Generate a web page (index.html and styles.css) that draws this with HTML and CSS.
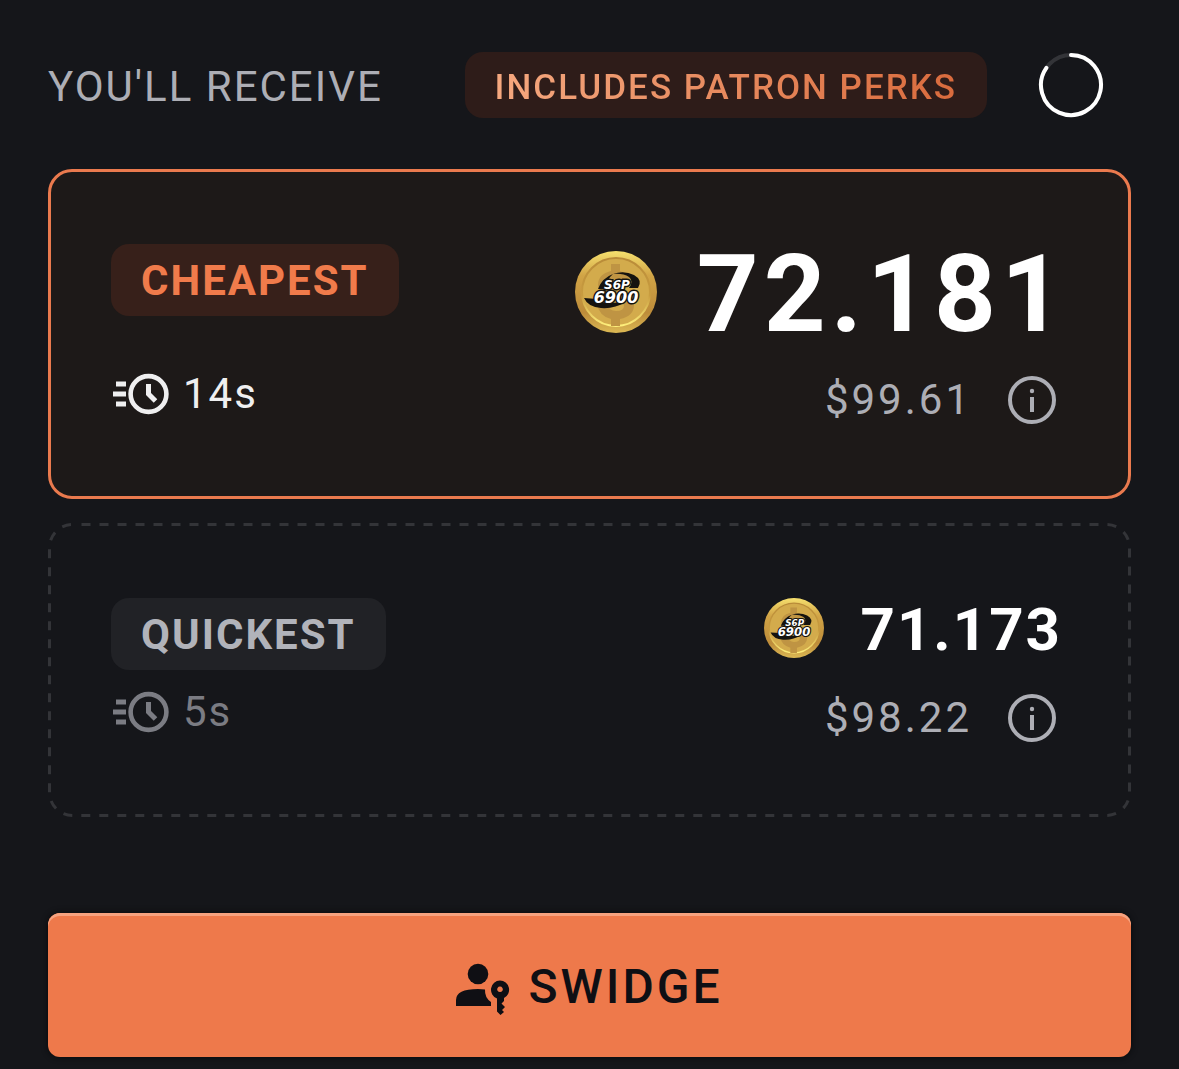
FILE: index.html
```html
<!DOCTYPE html>
<html lang="en">
<head>
<meta charset="utf-8">
<meta name="viewport" content="width=device-width, initial-scale=1">
<title>Swidge</title>
<link rel="stylesheet" href="styles.css">
</head>
<body>
<svg class="sprite" aria-hidden="true">
  <defs>
    <linearGradient id="rim" x1="0" y1="0" x2="0" y2="1">
      <stop offset="0" stop-color="#f6e06e"/>
      <stop offset="0.3" stop-color="#d1a446"/>
      <stop offset="0.75" stop-color="#bd8c3a"/>
      <stop offset="1" stop-color="#dcb954"/>
    </linearGradient>
    <linearGradient id="groove" x1="0" y1="0" x2="0" y2="1">
      <stop offset="0" stop-color="#b98b38"/>
      <stop offset="0.55" stop-color="#c99d40"/>
      <stop offset="1" stop-color="#fff07c"/>
    </linearGradient>
  </defs>
  <symbol id="coin" viewBox="0 0 82 82">
    <circle cx="41" cy="41" r="41" fill="url(#rim)"/>
    <circle cx="41" cy="41" r="34" fill="#d3ab4c" stroke="url(#groove)" stroke-width="2"/>
    <path d="M36 13h9v7q11 3 13 13H48q-2-5-8-5-7 0-7 5 0 4 9 6 17 4 17 15 0 11-14 14v7h-9v-7Q24 65 22 53h10q2 7 9 7 8 0 8-5 0-4-9-6-17-3-17-15 0-11 13-14z" fill="#bf9443"/>
    <path d="M38 23Q49 19 59 24 68 29 63 37H54Q59 30 54 26 48 22 38 23z" fill="#15130f"/>
    <path d="M38 23Q27 27 23 38H30Q31 29 38 23z" fill="#15130f"/>
    <path d="M9 47Q13 56 26 57 40 58 50 51L36 52Q27 53 22 48z" fill="#15130f"/>
  </symbol>
  <symbol id="clock" viewBox="0 0 60 60">
    <g fill="none" stroke="currentColor" stroke-width="5">
      <circle cx="37.500" cy="30" r="17.900" stroke-width="4.600"/>
      <path d="M37.500 20v10l7 7M5 20h10M2 30h13M5 40h10"/>
    </g>
  </symbol>
  <symbol id="info" viewBox="0 0 48 48">
    <circle cx="24" cy="24" r="22" fill="none" stroke="currentColor" stroke-width="4"/>
    <circle cx="24" cy="15" r="2.200" fill="currentColor"/>
    <path d="M24 21v15" stroke="currentColor" stroke-width="4"/>
  </symbol>
</svg>

<main class="panel">
  <header class="header">
    <h1 class="title">YOU'LL RECEIVE</h1>
    <div class="header-end">
      <span class="perks"><span class="perks-text">INCLUDES PATRON PERKS</span></span>
      <button class="refresh" type="button" aria-label="Refresh quotes">
        <svg width="66" height="66" viewBox="0 0 66 66" fill="none" stroke-width="4">
          <circle cx="33" cy="33" r="30" stroke="#333438"/>
          <path d="M33 3A30 30 0 1 1 8.400 15.800" stroke="#fff" stroke-linecap="round"/>
        </svg>
      </button>
    </div>
  </header>

  <section class="quotes">
    <article class="quote selected">
      <div class="side">
        <span class="badge">CHEAPEST</span>
        <span class="time"><svg class="clock"><use href="#clock"/></svg>14s</span>
      </div>
      <div class="amounts">
        <div class="amount">
          <svg class="coin" viewBox="0 0 82 82">
            <use href="#coin"/>
            <text class="coin-text" x="42" y="38" font-size="12">S6P</text>
            <text class="coin-text" x="41" y="52" font-size="16">6900</text>
          </svg>
          <span class="number">72.181</span>
        </div>
        <div class="value">$99.61
          <button class="info" type="button" aria-label="Cheapest route details"><svg class="info-icon"><use href="#info"/></svg></button>
        </div>
      </div>
    </article>

    <article class="quote">
      <svg class="outline" aria-hidden="true"><rect class="outline-rect"/></svg>
      <div class="side">
        <span class="badge">QUICKEST</span>
        <span class="time"><svg class="clock"><use href="#clock"/></svg>5s</span>
      </div>
      <div class="amounts">
        <div class="amount">
          <svg class="coin" viewBox="0 0 82 82">
            <use href="#coin"/>
            <text class="coin-text" x="42" y="38" font-size="12">S6P</text>
            <text class="coin-text" x="41" y="52" font-size="16">6900</text>
          </svg>
          <span class="number">71.173</span>
        </div>
        <div class="value">$98.22
          <button class="info" type="button" aria-label="Quickest route details"><svg class="info-icon"><use href="#info"/></svg></button>
        </div>
      </div>
    </article>
  </section>

  <button class="submit" type="button">
    <svg width="54" height="56" viewBox="0 -4 54 56" fill="currentColor" aria-hidden="true">
      <circle cx="22" cy="11" r="10.300"/>
      <path d="M0 43V37Q0 26 22 26q4 0 7 .4-.5 8 6 12.600V43z"/>
      <path fill-rule="evenodd" d="M44 17.500a9.300 9.300 0 0 1 4 17.600v2.900l-2.500 2.500 3.500 3.500-3 3 2 2-3.500 3-3.500-3.500V35.500A9.300 9.300 0 0 1 44 17.500zm0 6a2.800 2.800 0 1 0 .01 0z"/>
    </svg>
    SWIDGE
  </button>
</main>
</body>
</html>
```
FILE: styles.css
```css
* { box-sizing: border-box; }

body {
  margin: 0;
  background: #15161a;
  color: #fff;
  font-family: Roboto, "Liberation Sans", sans-serif;
  font-size: 42px;
  line-height: 60px;
  letter-spacing: 2px;
}

button {
  border: 0;
  padding: 0;
  background: none;
  color: inherit;
  font: inherit;
  letter-spacing: inherit;
  cursor: pointer;
}

svg { display: block; flex: none; }

.sprite { position: absolute; width: 0; height: 0; }

.panel {
  display: flex;
  flex-direction: column;
  padding: 25px 48px 12px;
}

.header,
.header-end,
.amount,
.value,
.time {
  display: flex;
  align-items: center;
}

.header { justify-content: space-between; }
.header-end { gap: 24px; }

.title {
  margin: 0;
  padding-top: 4px;
  color: #adaeb5;
  font-size: 42px;
  font-weight: 400;
}

.perks {
  padding: 6px 30px 0;
  border-radius: 18px;
  background: #2e1c19;
  font-size: 35px;
  font-weight: 500;
}

.perks-text {
  background: linear-gradient(90deg, #f5a87f, #d96b3d);
  background-clip: text;
  -webkit-background-clip: text;
  color: transparent;
}

.refresh {
  display: grid;
  place-items: center;
  width: 120px;
  height: 120px;
}

.quotes {
  display: flex;
  flex-direction: column;
  gap: 24px;
  margin: 24px 0 96px;
}

.quote {
  position: relative;
  display: flex;
  justify-content: space-between;
  padding: 60px;
  border: 3px solid transparent;
  border-radius: 24px;
}

.selected {
  border-color: #ea7a4e;
  background: #1d1918;
}

.outline {
  position: absolute;
  inset: -3px;
  width: calc(100% + 6px);
  height: calc(100% + 6px);
  padding: 1.5px;
  overflow: visible;
  pointer-events: none;
}

.outline-rect {
  width: 100%;
  height: 100%;
  rx: 23px;
  fill: none;
  stroke: #333438;
  stroke-width: 3px;
  stroke-dasharray: 9 9;
  stroke-dashoffset: 9px;
}

.side {
  display: flex;
  flex-direction: column;
  align-items: flex-start;
  gap: 12px;
  padding-top: 12px;
}

.selected .side { gap: 48px; }

.badge {
  padding: 7px 30px 5px;
  border-radius: 18px;
  background: #212226;
  color: #b1b3ba;
  font-weight: 700;
}

.selected .badge {
  background: #37201a;
  color: #f07b4b;
}

.time {
  gap: 12px;
  color: #7b7c83;
}

.selected .time { color: #efeff0; }

.clock { width: 60px; height: 60px; }

.amounts {
  display: flex;
  flex-direction: column;
  align-items: flex-end;
  gap: 12px;
}

.amount {
  gap: 36px;
  height: 84px;
  padding-right: 6px;
  font-size: 60px;
  font-weight: 700;
  line-height: 80px;
}

.selected .amount {
  gap: 40px;
  height: 120px;
  padding-right: 0;
  font-size: 108px;
  line-height: 112px;
  letter-spacing: 5px;
}

.number { padding-top: 4px; }

.coin { width: 60px; height: 60px; }
.selected .coin { width: 82px; height: 82px; }

.coin-text {
  fill: #fff;
  stroke: #15130f;
  stroke-width: 3px;
  paint-order: stroke;
  font-family: "DejaVu Sans", sans-serif;
  font-weight: 700;
  font-style: italic;
  letter-spacing: 0;
  text-anchor: middle;
}

.value {
  gap: 24px;
  color: #adaeb5;
  letter-spacing: 3px;
}

.info {
  display: grid;
  place-items: center;
  width: 72px;
  height: 72px;
}

.info-icon { width: 48px; height: 48px; }

.submit {
  display: flex;
  align-items: center;
  justify-content: center;
  gap: 18px;
  min-height: 144px;
  padding-top: 4px;
  border-radius: 12px;
  background: #ee794b;
  box-shadow: inset 0 3px #f6a27f, 0 0 6px #08090b;
  color: #0f0f14;
  font-size: 48px;
  font-weight: 500;
  letter-spacing: 3px;
}
```
